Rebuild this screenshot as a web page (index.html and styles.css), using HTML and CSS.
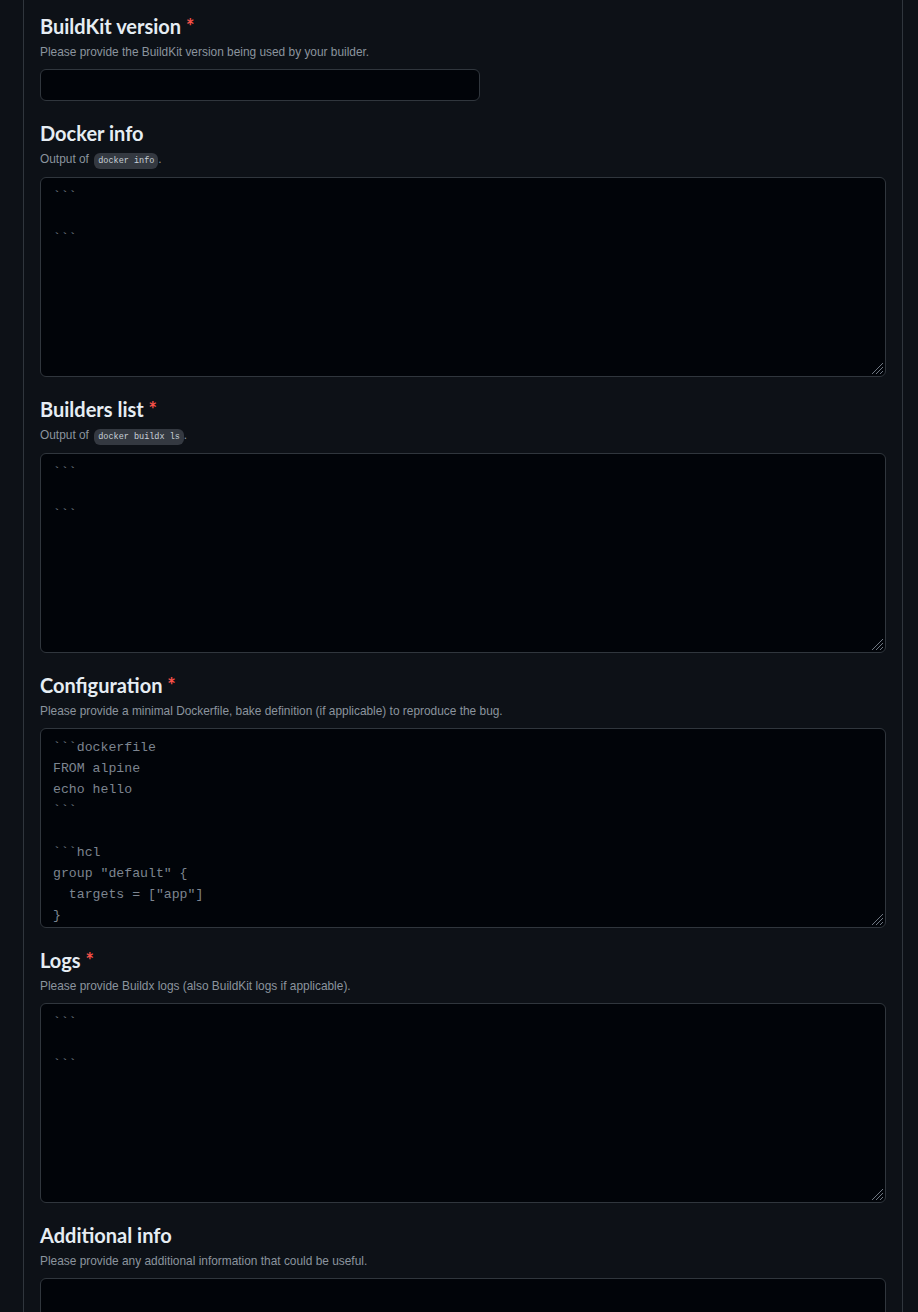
FILE: index.html
```html
<!DOCTYPE html>
<html lang="en">
<head>
<meta charset="utf-8">
<title>Bug report form</title>
<link rel="stylesheet" href="styles.css">
</head>
<body>
<main class="form">
  <section class="field">
    <h3 class="label">BuildKit version <span class="req">*</span></h3>
    <p class="desc">Please provide the BuildKit version being used by your builder.</p>
    <input class="input" type="text">
  </section>

  <section class="field">
    <h3 class="label">Docker info</h3>
    <p class="desc">Output of <code class="code">docker info</code>.</p>
    <div class="area-wrap">
      <textarea class="area">&#96;&#96;&#96;

&#96;&#96;&#96;</textarea>
      <svg class="grip" width="14" height="14" viewBox="0 0 14 14"><path d="M13 2L2 13M13 6L6 13M13 10L10 13" stroke="#6e7681" stroke-width="1"/></svg>
    </div>
  </section>

  <section class="field">
    <h3 class="label">Builders list <span class="req">*</span></h3>
    <p class="desc">Output of <code class="code">docker buildx ls</code>.</p>
    <div class="area-wrap">
      <textarea class="area">&#96;&#96;&#96;

&#96;&#96;&#96;</textarea>
      <svg class="grip" width="14" height="14" viewBox="0 0 14 14"><path d="M13 2L2 13M13 6L6 13M13 10L10 13" stroke="#6e7681" stroke-width="1"/></svg>
    </div>
  </section>

  <section class="field">
    <h3 class="label">Configuration <span class="req">*</span></h3>
    <p class="desc">Please provide a minimal Dockerfile, bake definition (if applicable) to reproduce the bug.</p>
    <div class="area-wrap">
      <textarea class="area">&#96;&#96;&#96;dockerfile
FROM alpine
echo hello
&#96;&#96;&#96;

&#96;&#96;&#96;hcl
group "default" {
  targets = ["app"]
}
target "app" {
  dockerfile = "Dockerfile"
}
&#96;&#96;&#96;</textarea>
      <svg class="grip" width="14" height="14" viewBox="0 0 14 14"><path d="M13 2L2 13M13 6L6 13M13 10L10 13" stroke="#6e7681" stroke-width="1"/></svg>
    </div>
  </section>

  <section class="field">
    <h3 class="label">Logs <span class="req">*</span></h3>
    <p class="desc">Please provide Buildx logs (also BuildKit logs if applicable).</p>
    <div class="area-wrap">
      <textarea class="area">&#96;&#96;&#96;

&#96;&#96;&#96;</textarea>
      <svg class="grip" width="14" height="14" viewBox="0 0 14 14"><path d="M13 2L2 13M13 6L6 13M13 10L10 13" stroke="#6e7681" stroke-width="1"/></svg>
    </div>
  </section>

  <section class="field">
    <h3 class="label">Additional info</h3>
    <p class="desc">Please provide any additional information that could be useful.</p>
    <div class="area-wrap">
      <textarea class="area"></textarea>
      <svg class="grip" width="14" height="14" viewBox="0 0 14 14"><path d="M13 2L2 13M13 6L6 13M13 10L10 13" stroke="#6e7681" stroke-width="1"/></svg>
    </div>
  </section>
</main>
</body>
</html>
```

FILE: styles.css
```css
* { box-sizing: border-box; }

html, body {
  margin: 0;
  padding: 0;
  background: #0d1117;
  color-scheme: dark;
}

body {
  font-family: "Liberation Sans", Arial, sans-serif;
  color: #e6edf3;
}

.form {
  margin-left: 23px;
  width: 880px;
  min-height: 1312px;
  padding: 11px 16px 0;
  border-left: 1px solid #30363d;
  border-right: 1px solid #30363d;
}

.field {
  margin: 0 0 17px;
}

.label {
  margin: 0 0 2px;
  font-family: Lato, "Liberation Sans", sans-serif;
  font-size: 20px;
  font-weight: 700;
  line-height: 30px;
  color: #e6edf3;
}

.req {
  color: #f85149;
}

.desc {
  margin: 0 0 8px;
  font-size: 11.9px;
  line-height: 18px;
  color: #8b949e;
}

.code {
  display: inline-block;
  font-family: "Liberation Mono", monospace;
  font-size: 8.5px;
  line-height: 12px;
  margin-left: 2px;
  padding: 2px 4px;
  border-radius: 6px;
  background: #343941;
  color: #c9d1d9;
  vertical-align: 0;
}

.input {
  display: block;
  width: 440px;
  height: 32px;
  background: #010409;
  border: 1px solid #30363d;
  border-radius: 6px;
  outline: none;
}

.area-wrap {
  position: relative;
}

.area {
  display: block;
  width: 100%;
  height: 200px;
  margin: 0;
  padding: 8px 12px;
  background: #010409;
  border: 1px solid #30363d;
  border-radius: 6px;
  font-family: "Liberation Mono", monospace;
  font-size: 13.2px;
  line-height: 21px;
  color: #7d8590;
  resize: none;
  overflow: hidden;
  outline: none;
}

.grip {
  position: absolute;
  right: 2px;
  bottom: 2px;
  display: block;
}
```
